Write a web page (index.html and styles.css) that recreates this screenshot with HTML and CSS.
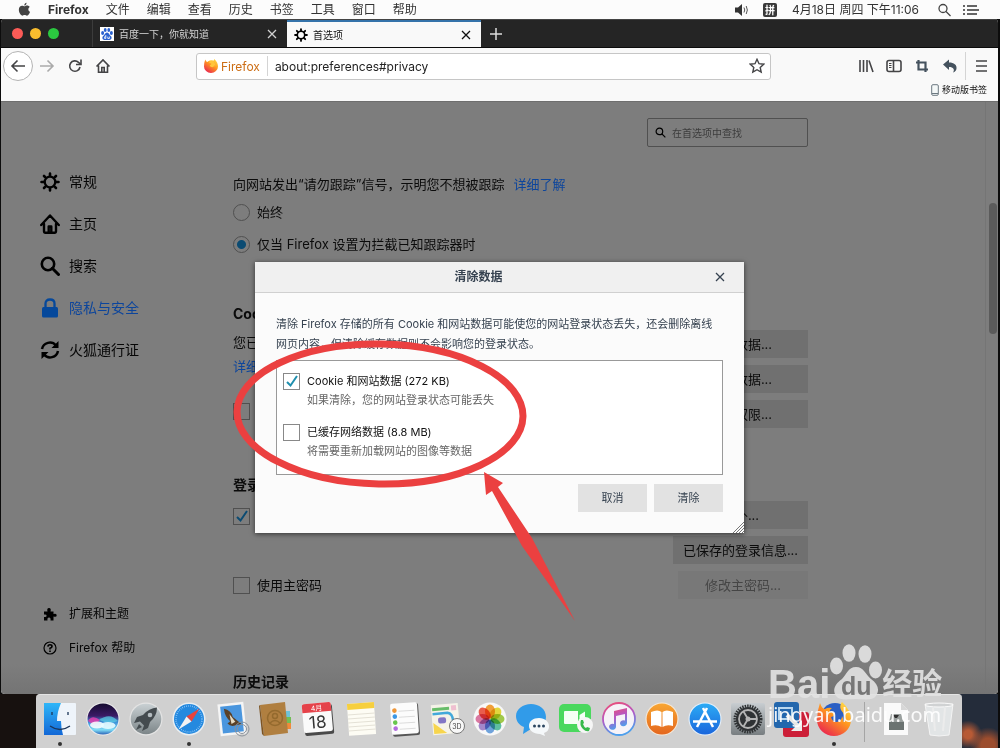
FILE: index.html
```html
<!DOCTYPE html>
<html lang="zh-CN">
<head>
<meta charset="utf-8">
<title>首选项</title>
<link rel="stylesheet" href="styles.css">
</head>
<body>
<div class="desktop">
  <header class="menubar">
    <svg class="apple" viewBox="0 0 14 16" aria-hidden="true"><path d="M9.2 0.6C9.3 2 8.2 3.6 6.7 3.7C6.5 2.3 7.8 0.8 9.2 0.6ZM7 4.6C7.7 4.6 8.5 3.8 9.8 3.8C11 3.8 12 4.4 12.6 5.3C10.4 6.6 10.8 9.6 13 10.5C12.5 12 11.2 14.6 9.7 14.6C8.7 14.6 8.3 14 7.1 14C5.9 14 5.5 14.6 4.6 14.6C2.8 14.6 0.9 11.1 0.9 8.4C0.9 5.6 2.6 4 4.4 4C5.6 4 6.4 4.6 7 4.6Z"/></svg>
    <nav class="menus">
      <b>Firefox</b><span>文件</span><span>编辑</span><span>查看</span><span>历史</span><span>书签</span><span>工具</span><span>窗口</span><span>帮助</span>
    </nav>
    <div class="status">
      <svg class="i16" viewBox="0 0 16 16" aria-hidden="true"><path d="M1 5.5H4L8 2V14L4 10.500H1Z" fill="#333"/><path d="M10 5.500Q11.500 8 10 10.500M12.200 4Q14.500 8 12.200 12" fill="none" stroke="#555"/></svg>
      <span class="ime">拼</span>
      <span class="clock">4月18日 周四 下午11:06</span>
      <svg class="i16 search-status" viewBox="0 0 16 16" fill="none" stroke="#444" stroke-width="1.3" aria-hidden="true"><circle cx="6" cy="6.500" r="4"/><path d="M9 9.500L13.500 14"/></svg>
      <svg class="i16" viewBox="0 0 16 16" fill="none" stroke="#333" stroke-width="1.600" aria-hidden="true"><path d="M0 4H2M4 4H14M0 8H2M4 8H16M0 12H2M4 12H14"/></svg>
    </div>
  </header>

  <div class="window">
    <div class="tabbar">
      <div class="lights"><i class="red"></i><i class="yellow"></i><i class="green"></i></div>
      <div class="tab">
        <svg class="i14" viewBox="0 0 14 14" aria-hidden="true"><rect width="14" height="14" fill="#fff"/><g fill="#2b62cf"><ellipse cx="2.600" cy="6" rx="1.500" ry="2"/><ellipse cx="5.200" cy="3" rx="1.400" ry="2"/><ellipse cx="8.800" cy="3" rx="1.400" ry="2"/><ellipse cx="11.400" cy="6" rx="1.500" ry="2"/><path d="M7 5.500C9 5.500 9.400 8 11 9.300C12.500 11 11 13.300 9 13H5C3 13.300 1.500 11 3 9.300C4.600 8 5 5.500 7 5.500Z"/></g><path d="M5.800 8V11.500H4.600V9.800H5.800M7.800 9.600V11.500H9.400V9.600" fill="none" stroke="#fff" stroke-width=".8"/></svg>
        <span class="tab-title">百度一下，你就知道</span>
        <button class="x" aria-label="关闭标签页"><svg viewBox="0 0 10 10"><path d="M1 1L9 9M9 1L1 9"/></svg></button>
      </div>
      <div class="tab active">
        <svg class="i14" viewBox="0 0 20 20" aria-hidden="true"><use href="#gear"/></svg>
        <span class="tab-title">首选项</span>
        <button class="x" aria-label="关闭标签页"><svg viewBox="0 0 10 10"><path d="M1 1L9 9M9 1L1 9"/></svg></button>
      </div>
      <button class="newtab" aria-label="新建标签页"><svg viewBox="0 0 12 12"><path d="M6 0V12M0 6H12"/></svg></button>
    </div>

    <div class="navbar">
      <div class="nav-left">
        <button class="back" aria-label="后退"><svg class="i16" viewBox="0 0 16 16"><path d="M15 8H2M7.500 2.500L2 8L7.500 13.500"/></svg></button>
        <button class="forward" aria-label="前进"><svg class="i16" viewBox="0 0 16 16"><path d="M1 8H14M8.500 2.500L14 8L8.500 13.500"/></svg></button>
        <button aria-label="刷新"><svg class="i16" viewBox="0 0 16 16"><path d="M13 9A5.200 5.200 0 1 1 11.500 4.300L13.500 6"/><path d="M14 1.500V6.500H9"/></svg></button>
        <button aria-label="主页"><svg class="i16" viewBox="0 0 16 16"><path d="M1.500 8.500L8 2L14.500 8.500M3.500 7.500V14.200H12.500V7.500"/><path d="M6.800 14V9.500H9.200V14"/></svg></button>
      </div>
      <div class="urlbar">
        <button class="identity"><svg class="i14" viewBox="0 0 34 34" aria-hidden="true"><circle cx="18" cy="15" r="12" fill="#ffc63c"/><path d="M3 1Q5 7 8 7Q11 5 15 6Q12 8 13 10L18 11Q18 14 14 15Q15 20 20 20Q25 19 25 14Q27 17 26 20Q30 15 24 8Q22 4 25 0Q34 8 34 18A17 16 0 0 1 0 18Q0 9 3 1Z" fill="url(#fx)"/></svg>Firefox</button>
        <input aria-label="地址" value="about:preferences#privacy">
        <button aria-label="添加书签"><svg class="i16 star" viewBox="0 0 16 16"><path d="M8 1.300L10 5.700L14.800 6.200L11.200 9.400L12.200 14.200L8 11.700L3.800 14.200L4.800 9.400L1.200 6.200L6 5.700Z"/></svg></button>
      </div>
      <div class="nav-right">
        <button aria-label="书架"><svg class="i16" viewBox="0 0 16 16"><path d="M2 2V14M5.500 2V14M9 2V14M11 2.500L15 14"/></svg></button>
        <button aria-label="侧栏"><svg class="i16" viewBox="0 0 16 16"><rect x="1" y="2.500" width="14" height="11" rx="2"/><path d="M7.500 2.500V13.500"/><path stroke-width="1" d="M3 5.500H5.500M3 7.500H5.500M3 9.500H5.500"/></svg></button>
        <button aria-label="截图"><svg class="i16" viewBox="0 0 16 16"><path stroke="#45525e" stroke-width="2.200" d="M4.500 2V11.500H14M2 4.500H11.500V14"/></svg></button>
        <button aria-label="撤销"><svg class="i16" viewBox="0 0 16 16"><path d="M1 6.500L7 1.500V4.500C12 4.500 15 7 14.500 10.500C14.300 12.500 13 14 11 14.500C13 11.500 11.500 9 7 9V12Z" fill="#45525e" stroke="none"/></svg></button>
        <i class="sep"></i>
        <button aria-label="菜单"><svg class="i16" viewBox="0 0 16 16"><path d="M3 3H14M3 8H14M3 13H14"/></svg></button>
      </div>
    </div>
    <div class="bookmarks">
      <svg viewBox="0 0 8 12" aria-hidden="true"><rect x=".7" y=".7" width="6.600" height="10.600" rx="1.200" fill="#f4f8f8" stroke="#6c7880"/><path d="M1 9.500H7" stroke="#6c7880"/></svg>
      <span>移动版书签</span>
    </div>

    <div class="content">
      <aside class="sidebar">
        <nav class="cats">
          <a href="#general"><svg viewBox="0 0 20 20"><g id="gear" fill="none" stroke="#000"><circle cx="10" cy="10" r="5.300" stroke-width="2.300"/><path stroke-width="2.600" stroke-linecap="round" d="M10 1.500V4M10 16V18.500M1.500 10H4M16 10H18.500M4 4L5.700 5.700M14.300 14.300L16 16M4 16L5.700 14.300M14.300 5.700L16 4"/></g></svg>常规</a>
          <a href="#home"><svg viewBox="0 0 20 20" fill="none" stroke="#000" stroke-width="2.400" stroke-linejoin="round" stroke-linecap="round"><path d="M1.200 11L10 1.500L18.800 11M4 10V17Q4 18.800 5.500 18.800H14.500Q16 18.800 16 17V10"/><path d="M8.700 18V12.500H11.300V18" stroke-width="2.400"/></svg>主页</a>
          <a href="#search"><svg viewBox="0 0 20 20" fill="none" stroke="#000" stroke-width="2.600"><circle cx="8" cy="8" r="6.200"/><path d="M12.300 12.300L18.500 18.500" stroke-width="3" stroke-linecap="round"/></svg>搜索</a>
          <a href="#privacy" class="on"><svg viewBox="0 0 20 20"><path d="M5.500 10V5.500Q5.500 1.500 10 1.500Q14.500 1.500 14.500 5.500V10" fill="none" stroke="#05489b" stroke-width="2.300"/><rect x="2" y="9" width="16" height="10.500" rx="1.500" fill="#05489b"/></svg>隐私与安全</a>
          <a href="#sync"><svg viewBox="0 0 20 20" fill="none" stroke="#000" stroke-width="2.500"><path d="M2 9A8 8 0 0 1 16 5.500M18 11A8 8 0 0 1 4 14.500"/><path d="M18.500 1V8H11.500ZM1.500 19V12H8.500Z" fill="#000" stroke="none"/></svg>火狐通行证</a>
        </nav>
        <nav class="side-foot">
          <a href="#addons"><svg viewBox="0 0 14 14"><path d="M1 4.500H4.500Q3.500 1 6 1Q8.500 1 7.500 4.500H10.500V7Q13.700 6 13.700 8.300Q13.700 10.600 10.500 9.500V13.500H7.500Q8 10.500 6 10.500Q4 10.500 4.500 13.500H1V10Q3.600 10.500 3.600 8.800Q3.600 7 1 7.500Z"/></svg>扩展和主题</a>
          <a href="#help"><svg viewBox="0 0 14 14" fill="none" stroke="#000" stroke-width="1.200"><circle cx="7" cy="7" r="6"/><path stroke-width="1.600" d="M4.900 5.600Q5 3.800 7 3.800Q9 3.800 9 5.400Q9 6.400 7 7.200V8.400M7 9.400V11"/></svg>Firefox 帮助</a>
        </nav>
      </aside>

      <main class="prefs">
        <label class="search"><svg viewBox="0 0 12 12" fill="none" stroke="#000" stroke-width="1.300"><circle cx="4.800" cy="4.800" r="3.600"/><path d="M7.500 7.500L11.300 11.300"/></svg><input type="search" placeholder="在首选项中查找" aria-label="在首选项中查找"></label>
        <p class="dnt">向网站发出“请勿跟踪”信号，示明您不想被跟踪<a href="#more">详细了解</a></p>
        <label class="opt always"><input type="radio" name="dnt">始终</label>
        <label class="opt only"><input type="radio" name="dnt" checked>仅当 Firefox 设置为拦截已知跟踪器时</label>

        <h2 class="h-cookie">Coo</h2>
        <section class="split">
          <div class="left">
            <p>您已</p>
            <p><a href="#learn">详细</a></p>
            <label class="opt o-cookie"><input type="checkbox" aria-label="关闭时删除"></label>
          </div>
          <div class="btns"><button>清除数据...</button><button>管理数据...</button><button>管理权限...</button></div>
        </section>

        <h2 class="h-login">登录</h2>
        <section class="split">
          <div class="left">
            <label class="opt o-save"><input type="checkbox" checked aria-label="保存登录信息"></label>
            <label class="opt o-master"><input type="checkbox">使用主密码</label>
          </div>
          <div class="btns"><button>例外...</button><button>已保存的登录信息...</button><button class="off" disabled>修改主密码...</button></div>
        </section>
        <h2 class="h-history">历史记录</h2>
      </main>
      <div class="scroll"><i></i></div>

      <div class="overlay">
        <div class="dialog" role="dialog" aria-labelledby="dlg">
          <div class="dlg-head"><h1 id="dlg">清除数据</h1><button class="x" aria-label="关闭"><svg viewBox="0 0 10 10"><path d="M1 1L9 9M9 1L1 9"/></svg></button></div>
          <div class="dlg-body">
            <p>清除 Firefox 存储的所有 Cookie 和网站数据可能使您的网站登录状态丢失，还会删除离线网页内容，但清除缓存数据则不会影响您的登录状态。</p>
            <div class="box">
              <label class="choice"><input type="checkbox" checked><span>Cookie 和网站数据 (272 KB)<small>如果清除，您的网站登录状态可能丢失</small></span></label>
              <label class="choice"><input type="checkbox"><span>已缓存网络数据 (8.8 MB)<small>将需要重新加载网站的图像等数据</small></span></label>
            </div>
            <div class="actions"><button>取消</button><button>清除</button></div>
          </div>
          <svg class="grip" viewBox="0 0 12 12" aria-hidden="true"><path d="M1 12L12 1M4 12L12 4M7 12L12 7M10 12L12 10" stroke="#777" stroke-width="1"/></svg>
        </div>
      </div>
    </div>
  </div>

  <footer class="dockbar">
    <div class="dock">
      <span class="app run"><svg viewBox="0 0 34 34"><defs><linearGradient id="fb" x2="0" y2="1"><stop stop-color="#2fb6f8"/><stop offset="1" stop-color="#1267d6"/></linearGradient></defs><rect x="1" y="1" width="32" height="32" rx="1" fill="#eef4fa"/><path d="M1 1H18Q14 10 14 19H18Q18 26 20 33H1Z" fill="url(#fb)"/><path d="M7 24Q17 31 27 24M9 10V13M25 10V13" fill="none" stroke="#1c3658" stroke-width="1.300"/></svg></span>
      <span class="app"><svg viewBox="0 0 34 34"><defs><linearGradient id="si" x2="0" y2="1"><stop stop-color="#150c30"/><stop offset=".4" stop-color="#3b1a66"/><stop offset=".6" stop-color="#3d8fd8"/><stop offset=".85" stop-color="#7fdcf5"/><stop offset="1" stop-color="#2c63b8"/></linearGradient></defs><circle cx="17" cy="17" r="16.500" fill="#eee"/><circle cx="17" cy="17" r="15.500" fill="url(#si)"/><path d="M2 19Q6 12 14 18Q8 25 2 19Z" fill="#e23cae" opacity=".85"/><path d="M13 18Q24 10 32 19Q24 23 13 18Z" fill="#5bd6ea" opacity=".7"/><ellipse cx="11" cy="23" rx="7" ry="3.500" fill="#fff" opacity=".85"/><ellipse cx="22" cy="23.500" rx="7.500" ry="3.500" fill="#e5fcff" opacity=".9"/></svg></span>
      <span class="app"><svg viewBox="0 0 34 34"><defs><linearGradient id="la" x2="0" y2="1"><stop stop-color="#c9d0d3"/><stop offset="1" stop-color="#7c8588"/></linearGradient></defs><circle cx="17" cy="17" r="16.500" fill="#e4e4e4"/><circle cx="17" cy="17" r="15.300" fill="url(#la)"/><path d="M28 5.500Q20 6 14 13L8 15L5 21L11 19.500L15 23.500L13 29L19 26L21 20Q28 14 28 5.500ZM10 22L7 28L13 25Z" fill="#444b4f"/><circle cx="21" cy="13" r="2.300" fill="#b4bcc0"/></svg></span>
      <span class="app run"><svg viewBox="0 0 34 34"><circle cx="17" cy="17" r="16.500" fill="#e9eef2"/><circle cx="17" cy="17" r="15" fill="#2489df"/><circle cx="17" cy="17" r="13" fill="none" stroke="#a9d7ff" stroke-width="1.500" stroke-dasharray=".6 1.400"/><path d="M27.500 6.500L19.500 19.500L14.500 14.500Z" fill="#e8433e"/><path d="M6.500 27.500L14.500 14.500L19.500 19.500Z" fill="#f2f2f2"/></svg></span>
      <span class="app"><svg viewBox="0 0 34 34"><g transform="rotate(-6 17 17)"><rect x="4" y="1" width="26" height="32" fill="#f5f5f5"/><rect x="6.500" y="3.500" width="21" height="27" fill="#4a96de"/><path d="M10 6Q17 8 18 15L26 23L18 24Q14 24 12 21L15 19Q10 14 10 6Z" fill="#5a4128"/><path d="M15 12L20 20L16 22Z" fill="#e6dcc4"/></g><circle cx="27" cy="27" r="7" fill="none" stroke="#8b929a"/><circle cx="27" cy="27" r="4.500" fill="none" stroke="#8b929a"/></svg></span>
      <span class="app"><svg viewBox="0 0 34 34"><path d="M28 9H32V15H28Z" fill="#6fc3d8"/><path d="M28 15H33V21H28Z" fill="#72bd55"/><path d="M29 21H33V27H29Z" fill="#f08a3a"/><path d="M2 3L27 0L30 31L6 34Z" fill="#b07f40"/><path d="M2 3L6 34L4 32L1 4Z" fill="#7d5423"/><g fill="none" stroke="#946a2e" stroke-width="1.500"><circle cx="17" cy="16" r="7.500"/><circle cx="17" cy="14" r="2.500"/><path d="M12 21Q17 16 22 21"/></g></svg></span>
      <span class="app"><svg viewBox="0 0 34 34"><g transform="rotate(-5 17 17)"><rect x="3" y="3" width="29" height="30" rx="2" fill="#4a4a4a"/><rect x="2" y="1" width="29" height="29" rx="2" fill="#fafafa"/><path d="M2 10V3Q2 1 4 1H29Q31 1 31 3V10Z" fill="#e5424a"/><text x="16.500" y="8.500" text-anchor="middle" class="cal-month">4月</text><text x="16.500" y="26" text-anchor="middle" class="cal-day">18</text></g></svg></span>
      <span class="app"><svg viewBox="0 0 34 34"><g transform="rotate(-4 17 17)"><rect x="4" y="1" width="27" height="32" fill="#fdfcf4"/><rect x="4" y="1" width="27" height="6" fill="#f6cf3e"/><path d="M4 12H31M4 16H31M4 20H31M4 24H31M4 28H31" stroke="#e4e1d6"/></g></svg></span>
      <span class="app"><svg viewBox="0 0 34 34"><g transform="rotate(-4 17 17)"><rect x="5" y="2" width="27" height="32" rx="2" fill="#555"/><rect x="4" y="1" width="27" height="31" rx="2" fill="#fcfcfc"/><path d="M12 9H28M12 15H28M12 21H28M12 27H28" stroke="#dcdcdc"/><circle cx="8" cy="8" r="2.300" fill="#ee9638"/><circle cx="8" cy="14" r="2.300" fill="#3d97e4"/><circle cx="8" cy="20" r="2.300" fill="#68c74e"/><circle cx="8" cy="26" r="2.300" fill="#b46bdf"/></g></svg></span>
      <span class="app"><svg viewBox="0 0 34 34"><g transform="rotate(-5 16 17)"><rect x="2" y="2" width="27" height="30" fill="#f5f3e8"/><path d="M3 5H20V8H3Z" fill="#68bd69"/><path d="M3 11H18Q23 12 23 20" fill="none" stroke="#42a9da" stroke-width="2.500"/><path d="M3 20L16 31H3Z" fill="#f7d54d"/><rect x="8" y="15" width="8" height="6" rx="2" fill="#8276c5"/><rect x="22" y="4" width="5" height="5" fill="#efbfd0"/></g><circle cx="27" cy="24" r="7.500" fill="#f8f8f8" stroke="#777"/><text x="27" y="27" text-anchor="middle" class="map-label">3D</text></svg></span>
      <span class="app"><svg viewBox="0 0 34 34"><circle cx="17" cy="17" r="16.500" fill="#f8f8f8"/><g class="petals"><ellipse cx="17" cy="9.500" rx="5" ry="7" fill="#f7a43a"/><ellipse cx="17" cy="9.500" rx="5" ry="7" fill="#e9dc3e" transform="rotate(45 17 17)"/><ellipse cx="17" cy="9.500" rx="5" ry="7" fill="#a5cf4c" transform="rotate(90 17 17)"/><ellipse cx="17" cy="9.500" rx="5" ry="7" fill="#62c4a6" transform="rotate(135 17 17)"/><ellipse cx="17" cy="9.500" rx="5" ry="7" fill="#72a7e2" transform="rotate(180 17 17)"/><ellipse cx="17" cy="9.500" rx="5" ry="7" fill="#a78bd0" transform="rotate(225 17 17)"/><ellipse cx="17" cy="9.500" rx="5" ry="7" fill="#e07aa6" transform="rotate(270 17 17)"/><ellipse cx="17" cy="9.500" rx="5" ry="7" fill="#f0604f" transform="rotate(315 17 17)"/></g></svg></span>
      <span class="app"><svg viewBox="0 0 34 34"><path d="M15 2C23 2 30 7 30 15C30 22 23 27 15 27L7 32L8 25C3 23 0 19 0 14C0 7 7 2 15 2Z" fill="#319be9"/><path d="M23 16C29 16 33 20 33 24C33 28 31 30 28 31L29 34L24 32C17 32 13 28 13 24C13 19 17 16 23 16Z" fill="#f5f8fa"/><g fill="#2c4660"><circle cx="18.500" cy="24" r="1.500"/><circle cx="23" cy="24" r="1.500"/><circle cx="27.500" cy="24" r="1.500"/></g></svg></span>
      <span class="app"><svg viewBox="0 0 34 34"><rect x="0" y="2" width="32" height="28" rx="5" fill="#4ad85e"/><path d="M5 10Q5 9 6 9H19V22H6Q5 22 5 21ZM20.500 13L26 9.500V21L20.500 18Z" fill="#f4fff5"/><circle cx="26" cy="23" r="8" fill="#f6f6f6"/><path d="M22 18L24 18L25 21L24 22Q25 25 27 26L28 25L31 26L30 29Q27 30 24 27Q20 23 22 18Z" fill="#38b94c"/></svg></span>
      <span class="app"><svg viewBox="0 0 34 34"><defs><linearGradient id="mu" x2=".3" y2="1"><stop stop-color="#f34c6f"/><stop offset=".5" stop-color="#b458c5"/><stop offset="1" stop-color="#4e9fec"/></linearGradient></defs><circle cx="17" cy="17" r="16" fill="#f6f3f8" stroke="url(#mu)" stroke-width="1.800"/><path d="M12 9L25 6V21A3.500 3 0 1 1 23 18.500V12L14 14V25A3.500 3 0 1 1 12 22Z" fill="url(#mu)"/></svg></span>
      <span class="app"><svg viewBox="0 0 34 34"><defs><linearGradient id="bo" x2="0" y2="1"><stop stop-color="#f8a633"/><stop offset="1" stop-color="#e4671e"/></linearGradient></defs><circle cx="17" cy="17" r="16.500" fill="#f6e9d8"/><circle cx="17" cy="17" r="15.400" fill="url(#bo)"/><path d="M6 10Q13 7 16.500 10V25Q12 22 6 24ZM17.500 10Q21 7 28 10V24Q22 22 17.500 25Z" fill="#fff"/></svg></span>
      <span class="app"><svg viewBox="0 0 34 34"><defs><linearGradient id="as" x2="0" y2="1"><stop stop-color="#2cabf5"/><stop offset="1" stop-color="#1a66dc"/></linearGradient></defs><circle cx="17" cy="17" r="16.500" fill="#e6f0fa"/><circle cx="17" cy="17" r="15.400" fill="url(#as)"/><path d="M19 6L9 25M15 6L25 25M5 19.500H29" fill="none" stroke="#fff" stroke-width="2.500"/></svg></span>
      <span class="app"><svg viewBox="0 0 34 34"><defs><linearGradient id="se" x2="0" y2="1"><stop stop-color="#c8cdd1"/><stop offset="1" stop-color="#777d80"/></linearGradient></defs><rect x="0" y="1" width="34" height="32" rx="2" fill="url(#se)"/><circle cx="17" cy="17" r="13" fill="none" stroke="#2f3234" stroke-width="3" stroke-dasharray="1.500 1"/><circle cx="17" cy="17" r="12" fill="#2f3234"/><circle cx="17" cy="17" r="9" fill="none" stroke="#b4b4b4" stroke-width="1.800"/><path d="M17 17H26M17 17L12.500 9.500M17 17L12.500 24.500" stroke="#b4b4b4" stroke-width="1.800"/><circle cx="17" cy="17" r="2.500" fill="#b4b4b4"/></svg></span>
      <span class="app"><svg viewBox="0 0 34 34"><rect x="9" y="10" width="26" height="25" rx="3" fill="#cc1f38"/><rect x="0" y="0" width="25" height="26" rx="3" fill="#2367ad"/><rect x="5" y="6" width="13" height="11" fill="none" stroke="#b8d7ef" stroke-width="2"/><path d="M13 13L26 26" stroke="#e7e7e7" stroke-width="4"/><path d="M28 18V29H17Z" fill="#eee"/></svg></span>
      <span class="app run"><svg viewBox="0 0 34 34"><defs><linearGradient id="fx" x1=".9" y1="0" x2=".2" y2="1"><stop stop-color="#ffe14b"/><stop offset=".45" stop-color="#ff9820"/><stop offset="1" stop-color="#e91e52"/></linearGradient></defs><circle cx="18" cy="15" r="14" fill="#2b5fc4"/><path d="M3 1Q5 7 8 7Q11 5 15 6Q12 8 13 10L18 11Q18 14 14 15Q15 20 20 20Q25 19 25 14Q27 17 26 20Q30 15 24 8Q22 4 25 0Q34 8 34 18A17 16 0 0 1 0 18Q0 9 3 1Z" fill="url(#fx)"/></svg></span>
      <i class="divider"></i>
      <span class="app"><svg viewBox="0 0 34 34"><path d="M5 1H22L29 8V33H5Z" fill="#fafafa"/><path d="M22 1V8H29Z" fill="#d7d7d7"/><path d="M12 12H22L25 20V28H10V20Z" fill="#9aa09e"/><path d="M10 20H25V28H10Z" fill="#6b7371"/><path d="M14 13H20L18 16H16Z" fill="#333"/></svg></span>
      <span class="app"><svg viewBox="0 0 34 34"><path d="M3 2H31L27 33Q17 35 8 33Z" fill="#e2e5e6" stroke="#f4f4f4"/><path d="M11 6L13 29M23 6L21 29" stroke="#ececec" stroke-width="2"/><ellipse cx="17" cy="3" rx="14" ry="2" fill="#d0d2d3" stroke="#fafafa"/></svg></span>
    </div>
  </footer>

  <svg class="mark" viewBox="0 0 350 290" aria-hidden="true"><ellipse cx="153" cy="79" rx="143" ry="70" fill="none" stroke="#eb4040" stroke-width="7" transform="rotate(1 153 79)"/><path d="M257 137L276 148L271 152L305 203L348 286L295 211L265 156L259 160Z" fill="#eb4040"/></svg>

  <div class="watermark">
    <div class="wm-top"><span class="wm-bai">Bai</span><span class="wm-paw"><svg viewBox="0 0 52 56" aria-hidden="true"><g fill="#e2e2e2"><ellipse cx="6.500" cy="22" rx="6.500" ry="8.500"/><ellipse cx="19" cy="9" rx="6.500" ry="8.700"/><ellipse cx="35" cy="10" rx="6.500" ry="8.700"/><ellipse cx="45.500" cy="26" rx="6.500" ry="8.500"/><path d="M26 23C34 23 35 30 41 35C48 40 50 46 46 52C42 57 34 55 26 55C18 55 10 57 6 52C2 46 5 40 12 35C17 30 18 23 26 23Z"/></g></svg><b>du</b></span><span class="wm-cn">经验</span></div>
    <div class="wm-url">jingyan.baidu.com</div>
  </div>
</div>
</body>
</html>
```
FILE: styles.css
```css
* { box-sizing: border-box; }
body { margin: 0; background: #0c0c0c; font-family: Inter, "Noto Sans CJK SC", sans-serif; color: #0b0b0b; }
button, input { font: inherit; color: inherit; }
button { border: 0; padding: 0; background: none; }
p, h1, h2 { margin: 0; }
a { text-decoration: none; color: #0c459c; }
svg { display: block; flex: none; }
.i16 { width: 16px; height: 16px; }
.i14 { width: 14px; height: 14px; }

.desktop { position: relative; display: flex; flex-direction: column; height: 100vh; min-height: 700px; overflow: hidden; }

/* System menu bar */
.menubar { display: flex; align-items: center; height: 19px; flex: none; padding: 0 21px 0 18px; background: #fcfcfc; color: #333; font-size: 12px; line-height: 18px; }
.apple { width: 13px; height: 15px; fill: #444; }
.menus { display: flex; gap: 17px; margin-left: 17px; white-space: nowrap; }
.status { display: flex; align-items: center; margin-left: auto; white-space: nowrap; }
.ime { margin: 0 15px 0 13px; width: 14px; height: 14px; border-radius: 2px; background: #3a3a3a; color: #fff; font-size: 10px; line-height: 14px; text-align: center; font-weight: 700; }
.search-status { margin: 0 10px 0 18px; }

/* Browser window */
.window { display: flex; flex-direction: column; flex: 1; min-height: 0; margin: 0 2px 0 1px; border-radius: 4px; overflow: hidden; background: #f9f9f9; }
.tabbar { display: flex; height: 29px; flex: none; background: #252525; border-top: 1px solid #444; border-bottom: 1px solid #0c0c0c; }
.lights { display: flex; align-items: center; gap: 7px; width: 92px; padding-left: 11px; border-right: 1px solid #3c3c3c; }
.lights i { width: 11px; height: 11px; border-radius: 50%; }
.red { background: #fc5b57; }
.yellow { background: #f9bd2e; }
.green { background: #2bc840; }
.tab { display: flex; align-items: center; gap: 5px; width: 194px; padding: 0 10px 0 7px; color: #d2d2d2; font-size: 10px; }
.tab-title { flex: 1; }
.active { background: #f9f9f9; color: #111; border-top: 2px solid #3573aa; }
.x svg { width: 10px; height: 10px; fill: none; stroke: currentColor; stroke-width: 1.3; }
.newtab { margin-left: 9px; color: #ddd; }
.newtab svg { width: 12px; height: 12px; stroke: currentColor; stroke-width: 1.5; }

.navbar { display: flex; align-items: center; height: 36px; flex: none; padding-right: 9px; }
.navbar button svg { fill: none; stroke: #444446; stroke-width: 1.6; }
.nav-left { display: flex; align-items: center; gap: 12px; width: 195px; padding-left: 2px; flex: none; }
.nav-left .back { display: grid; place-items: center; width: 30px; height: 30px; border: 1px solid #b4b4b4; border-radius: 50%; background: #fff; }
.nav-left .forward { margin-left: -6px; }
.navbar .forward svg { stroke: #aaa; }
.urlbar { display: flex; align-items: center; flex: 1; min-width: 0; height: 27px; padding-right: 5px; border: 1px solid #c6c6c6; border-radius: 3px; background: #fff; font-size: 12px; }
.identity { display: flex; align-items: center; gap: 3px; height: 20px; padding: 0 7px; border-right: 1px solid #d4d4d4; color: #cc6d14; }
.navbar .identity svg { stroke: none; }
.urlbar input { flex: 1; min-width: 0; border: 0; padding: 0 7px; background: none; color: #222; outline: 0; }
.navbar .star { stroke-width: 1.4; }
.nav-right { display: flex; align-items: center; gap: 12px; margin-left: 87px; }
.nav-right .sep { width: 1px; height: 28px; margin: 0 -5px; background: #d4d4d4; }
.bookmarks { display: flex; align-items: center; justify-content: flex-end; gap: 3px; height: 17px; flex: none; padding: 0 11px 5px 0; color: #111; font-size: 9px; line-height: 12px; }
.bookmarks svg { width: 8px; height: 12px; }

/* Preferences page */
.content { position: relative; display: flex; flex: 1; min-height: 0; overflow: hidden; border-top: 1px solid #6e6e6e; background: linear-gradient(#7d7d7d calc(100% - 30px), #747474); font-size: 13px; line-height: 24px; }
.sidebar { display: flex; flex-direction: column; justify-content: space-between; width: 232px; flex: none; padding: 68px 0 34px 39px; }
.sidebar nav { display: flex; flex-direction: column; }
.sidebar a { display: flex; align-items: center; color: #060606; }
.sidebar .cats { gap: 18px; font-size: 14px; }
.cats a { gap: 9px; }
.cats svg { width: 20px; height: 20px; }
.sidebar .on { color: #0c459c; }
.sidebar .side-foot { gap: 10px; font-size: 12px; }
.sidebar .side-foot a { gap: 12px; padding-left: 3px; }
.side-foot svg { width: 14px; height: 14px; }
.prefs { flex: 1; max-width: 575px; padding-top: 16px; }
.prefs h2 { font-size: 14px; line-height: 24px; }
.search { display: flex; align-items: center; gap: 6px; width: 161px; height: 29px; margin-left: auto; padding: 0 7px; border: 1px solid #505050; border-radius: 2px; font-size: 10px; }
.search svg { width: 11px; height: 11px; }
.search input { flex: 1; min-width: 0; border: 0; padding: 0; background: none; outline: 0; }
.search input::placeholder { color: #3c3c3c; opacity: 1; }
.dnt { margin-top: 25px; }
.dnt a { margin-left: 9px; }
.opt { display: flex; align-items: center; gap: 7px; height: 24px; }
.always { margin-top: 4px; }
.only { margin-top: 8px; }
.opt input, .choice input { appearance: none; flex: none; width: 17px; height: 17px; margin: 0; border: 1px solid #505050; }
.opt input[type="radio"] { border-radius: 50%; }
.opt input[type="radio"]:checked { background: radial-gradient(circle, #0b4b72 0 4px, transparent 5px); }
.opt input[type="checkbox"]:checked { background: no-repeat center / 14px 14px url("data:image/svg+xml,%3Csvg xmlns='http://www.w3.org/2000/svg' viewBox='0 0 14 14'%3E%3Cpath d='M2 8L5.500 11.500L12 2' fill='none' stroke='%230b4b72' stroke-width='2'/%3E%3C/svg%3E"); }
.h-cookie { margin-top: 46px; }
.split { display: flex; justify-content: space-between; margin-top: 4px; }
.btns { display: flex; flex-direction: column; align-items: flex-end; gap: 7px; }
.btns button { width: 135px; height: 28px; background: #707070; line-height: 27px; }
.btns .off { width: 130px; background: #787878; color: #454545; }
.o-cookie { margin-top: 21px; }
.h-login { margin-top: 45px; }
.o-save { margin-top: 3px; }
.o-master { margin-top: 45px; }
.h-history { margin-top: 71px; }
.scroll { width: 13px; margin-left: auto; padding: 101px 1px 0 3px; border-left: 1px solid #757575; }
.scroll i { display: block; width: 8px; height: 131px; border-radius: 4px; background: #5b5b5b; }

/* Clear data dialog */
.overlay { position: absolute; inset: 0 0 2px; display: flex; align-items: center; justify-content: center; }
.dialog { position: relative; width: 489px; background: #fbfbfb; box-shadow: 0 1px 5px rgba(0, 0, 0, .6); color: #364250; font-size: 11px; line-height: 20px; }
.dlg-head { display: flex; align-items: center; height: 31px; padding-right: 19px; border-bottom: 1px solid #d0d0d0; background: #f0f0f0; }
.dlg-head h1 { flex: 1; margin-right: 13px; font-size: 12px; font-weight: 600; text-align: center; }
.dlg-body { padding: 21px; }
.box { display: flex; flex-direction: column; gap: 13px; height: 115px; margin-top: 6px; padding: 11px 6px; border: 1px solid #999; background: #fff; }
.choice { display: flex; gap: 7px; color: #111; line-height: 19px; }
.choice input { margin-top: 1px; border-color: #888; background-color: #fff; }
.choice input:checked { background: #fff no-repeat center / 14px 14px url("data:image/svg+xml,%3Csvg xmlns='http://www.w3.org/2000/svg' viewBox='0 0 14 14'%3E%3Cpath d='M2 8L5.500 11.500L12 2' fill='none' stroke='%231f8fae' stroke-width='2'/%3E%3C/svg%3E"); }
.choice small { display: block; color: #666; font-size: 11px; }
.actions { display: flex; justify-content: flex-end; gap: 7px; margin-top: 9px; }
.actions button { width: 69px; height: 28px; background: #e2e2e2; }
.grip { position: absolute; right: 0; bottom: 0; width: 12px; height: 12px; }

/* Dock */
.dockbar { display: flex; justify-content: center; height: 54px; flex: none; margin-right: 2px; background: radial-gradient(circle at 97% 75%, #b75a35 0 4px, transparent 14px), radial-gradient(circle at 99% 95%, #9c4d2e 0 7px, transparent 18px), linear-gradient(90deg, #17110f 50%, #242c3a 50%); }
.dock { display: flex; padding: 0 2px; border-top: 1px solid #e4e4e4; border-radius: 4px 4px 0 0; background: #d0d0d0; }
.app { display: flex; flex-direction: column; align-items: center; gap: 6px; width: 43px; padding-top: 7px; }
.app svg { width: 34px; height: 34px; overflow: visible; }
.run::after { content: ""; width: 4px; height: 4px; border-radius: 50%; background: #333; }
.divider { width: 1px; height: 40px; margin: 7px 9px 0; background: #a5a5a5; }
.petals ellipse { mix-blend-mode: multiply; }
.cal-month { font-size: 7px; fill: #fff; }
.cal-day { font-size: 17px; fill: #333; }
.map-label { font-size: 7px; fill: #444; }

/* Callout drawn over the dialog */
.mark { position: absolute; left: 227px; top: 335px; width: 350px; height: 290px; pointer-events: none; }

.watermark { position: absolute; left: 768px; bottom: 18px; color: #e2e2e2; opacity: .92; pointer-events: none; white-space: nowrap; }
.wm-top { display: flex; align-items: flex-end; height: 57px; }
.wm-bai { font: 700 40px/32px "Liberation Sans", sans-serif; }
.wm-paw { display: grid; width: 52px; height: 56px; }
.wm-paw svg, .wm-paw b { grid-area: 1 / 1; }
.wm-paw svg { width: 52px; height: 56px; }
.wm-paw b { align-self: end; justify-self: center; color: #777; font: 700 25px/28px "Liberation Sans", sans-serif; }
.wm-cn { font: 700 30px/38px "Noto Sans CJK SC", sans-serif; }
.wm-url { color: #fff; font: 20px/30px "Noto Sans", sans-serif; }
```
